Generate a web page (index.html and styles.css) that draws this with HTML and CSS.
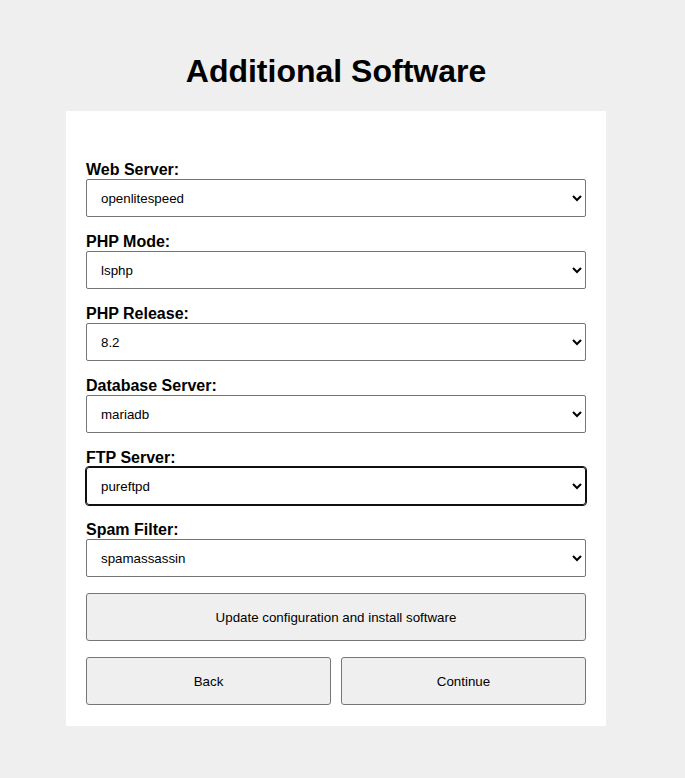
FILE: index.html
```html
<!DOCTYPE html>
<html lang="en">
<head>
<meta charset="utf-8">
<title>Additional Software</title>
<link rel="stylesheet" href="styles.css">
</head>
<body>
<div class="page">
  <h1 class="title">Additional Software</h1>
  <form class="card">
    <div class="field">
      <label class="label" for="web">Web Server:</label>
      <select class="select" id="web"><option>openlitespeed</option></select>
    </div>
    <div class="field">
      <label class="label" for="phpmode">PHP Mode:</label>
      <select class="select" id="phpmode"><option>lsphp</option></select>
    </div>
    <div class="field">
      <label class="label" for="phprel">PHP Release:</label>
      <select class="select" id="phprel"><option>8.2</option></select>
    </div>
    <div class="field">
      <label class="label" for="db">Database Server:</label>
      <select class="select" id="db"><option>mariadb</option></select>
    </div>
    <div class="field">
      <label class="label" for="ftp">FTP Server:</label>
      <select class="select select-focused" id="ftp"><option>pureftpd</option></select>
    </div>
    <div class="field field-last">
      <label class="label" for="spam">Spam Filter:</label>
      <select class="select" id="spam"><option>spamassassin</option></select>
    </div>
    <button type="button" class="btn btn-wide">Update configuration and install software</button>
    <div class="btn-row">
      <button type="button" class="btn">Back</button>
      <button type="button" class="btn">Continue</button>
    </div>
  </form>
</div>
</body>
</html>
```
FILE: styles.css
```css
html, body {
  margin: 0;
  padding: 0;
  background: #efefef;
  font-family: "Liberation Sans", Arial, sans-serif;
  color: #000;
}

.page {
  width: 672px;
  padding-top: 53px;
}

.title {
  margin: 0 0 21px;
  font-size: 32px;
  line-height: 37px;
  font-weight: bold;
  text-align: center;
}

.card {
  width: 500px;
  margin: 0 auto;
  background: #fff;
  padding: 49px 20px 21px;
  display: flex;
  flex-direction: column;
}

.field {
  display: flex;
  flex-direction: column;
  margin-bottom: 15px;
}

.field-last {
  margin-bottom: 16px;
}

.label {
  font-size: 16px;
  line-height: 19px;
  font-weight: bold;
}

.select {
  height: 38px;
  width: 100%;
  box-sizing: border-box;
  border: 1px solid #767676;
  border-radius: 2px;
  background-color: #fff;
  font-family: "Liberation Sans", Arial, sans-serif;
  font-size: 13.333px;
  color: #000;
  padding: 0 10px;
  margin: 0;
}

.select-focused {
  border-color: #101010;
  outline: 1px solid #101010;
  border-radius: 3px;
}

.btn {
  height: 48px;
  box-sizing: border-box;
  border: 1px solid #767676;
  border-radius: 3px;
  background: #efefef;
  font-family: "Liberation Sans", Arial, sans-serif;
  font-size: 13.333px;
  color: #000;
  margin: 0;
  padding: 0;
}

.btn-wide {
  width: 100%;
  margin-bottom: 16px;
}

.btn-row {
  display: grid;
  grid-template-columns: 1fr 1fr;
  gap: 10px;
}
```
